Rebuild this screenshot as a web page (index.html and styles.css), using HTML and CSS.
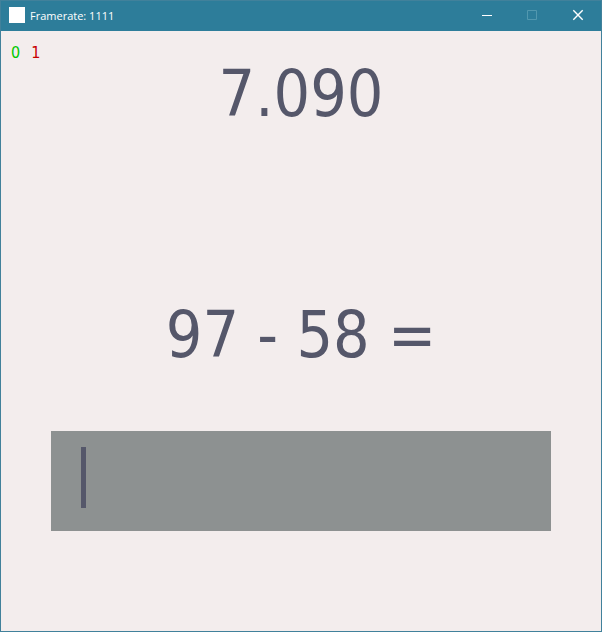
FILE: index.html
```html
<!DOCTYPE html>
<html lang="en">
<head>
<meta charset="utf-8">
<title>Framerate: 1111</title>
<link rel="stylesheet" href="styles.css">
</head>
<body>
<div class="window">
  <header class="titlebar">
    <span class="app-icon"></span>
    <h1 class="title">Framerate: 1111</h1>
    <div class="controls">
      <button class="control" type="button" aria-label="Minimize"><svg width="10" height="10" viewBox="0 0 10 10"><path d="M1 5.5h10"/></svg></button>
      <button class="control" type="button" aria-label="Maximize" disabled><svg width="10" height="10" viewBox="0 0 10 10"><path d="M.5 .5h9v9h-9z"/></svg></button>
      <button class="control close" type="button" aria-label="Close"><svg width="10" height="10" viewBox="0 0 10 10"><path d="M.3 .3l9.4 9.4M9.7 .3L.3 9.7"/></svg></button>
    </div>
  </header>
  <main class="game">
    <div class="score"><span class="right">0</span><span class="wrong">1</span></div>
    <div class="timer">7.090</div>
    <label class="question" for="answer">97 - 58 =</label>
    <input class="answer" id="answer" type="text" inputmode="numeric" autocomplete="off">
  </main>
</div>
</body>
</html>
```

FILE: styles.css
```css
* { box-sizing: border-box; }
body { margin: 0; }
.window {
  display: flex;
  flex-direction: column;
  min-height: 100vh;
  border: 1px solid #41819b;
  background: #f3eded;
  font-family: "DejaVu Sans Condensed", "Noto Sans", sans-serif;
}
.titlebar {
  display: flex;
  align-items: center;
  height: 30px;
  padding-left: 8px;
  background: #2d7d9a;
  color: #fff;
}
.app-icon { width: 16px; height: 16px; margin-top: -2px; background: #fff; }
.title {
  flex: 1;
  margin: 0 0 0 5px;
  font: 11px/16px "Open Sans", sans-serif;
}
.controls { display: flex; height: 100%; }
.control {
  display: flex;
  align-items: center;
  justify-content: center;
  width: 46px;
  padding: 0 0 2px;
  border: 0;
  background: none;
  color: #fff;
}
.control:disabled { color: #5298af; }
.control svg { fill: none; stroke: currentColor; overflow: visible; }
.close svg { stroke-width: 1.4; }
.game { display: flex; flex-direction: column; flex: 1; color: #55576a; }
.score {
  display: flex;
  gap: 11px;
  height: 24px;
  margin: 10px 10px 0;
  font-size: 16px;
  line-height: 24px;
}
.right { color: #00c800; }
.wrong { color: #c80000; }
.timer, .question {
  font-size: 64px;
  line-height: 80px;
  text-align: center;
  white-space: pre;
}
.timer { margin-top: -11px; }
.question { margin-top: 161px; }
.answer {
  height: 100px;
  margin: 56px 50px 0;
  padding: 0 30px;
  border: 0;
  outline: 0;
  background: linear-gradient(#55576a, #55576a) 30px 16px / 5px 61px no-repeat #8d9191;
  color: #55576a;
  font: 64px "DejaVu Sans Condensed", "Noto Sans", sans-serif;
}
```
